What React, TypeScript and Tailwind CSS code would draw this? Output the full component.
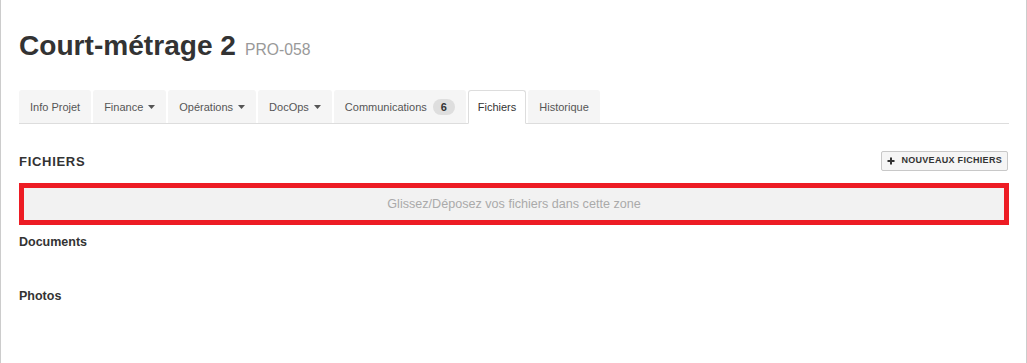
import React from "react";

const Caret = () => (
  <svg width="7" height="4" viewBox="0 0 7 4" className="ml-[5px]" aria-hidden>
    <path d="M0 0 L7 0 L3.5 4 Z" fill="#555" />
  </svg>
);

type Tab = { label: string; caret?: boolean; badge?: string; active?: boolean };

const tabs: Tab[] = [
  { label: "Info Projet" },
  { label: "Finance", caret: true },
  { label: "Opérations", caret: true },
  { label: "DocOps", caret: true },
  { label: "Communications", badge: "6" },
  { label: "Fichiers", active: true },
  { label: "Historique" },
];

export default function App() {
  return (
    <div
      className="w-full h-[363px] bg-white border-x border-[#cccccc] overflow-hidden text-[#333]"
      style={{ fontFamily: '"Liberation Sans", Arial, sans-serif' }}
    >
      <div className="pl-[18px] pr-[17px] pt-[32px]">
        <h1 className="flex items-baseline leading-none">
          <span className="text-[28.1px] font-bold text-[#333] leading-[28px]">Court-métrage 2</span>
          <span className="ml-[9px] text-[15.7px] text-[#999]">PRO-058</span>
        </h1>

        <div className="mt-[30px] flex items-end gap-[2px] border-b border-[#dddddd] h-[34px]">
          {tabs.map((t) =>
            t.active ? (
              <div
                key={t.label}
                className="h-[34px] -mb-px px-[9px] flex items-center bg-white border border-[#dddddd] border-b-white rounded-t-[3px] text-[11px] text-[#333] pt-[1px]"
              >
                {t.label}
              </div>
            ) : (
              <div
                key={t.label}
                className="h-[33px] px-[11px] pt-[1px] flex items-center bg-[#f5f5f5] rounded-t-[3px] text-[11px] text-[#555]"
              >
                {t.label}
                {t.caret && <Caret />}
                {t.badge && (
                  <span className="ml-[6px] h-[16px] w-[22px] rounded-full bg-[#dedede] text-[#333] font-bold text-[11px] flex items-center justify-center">
                    {t.badge}
                  </span>
                )}
              </div>
            )
          )}
        </div>

        <div className="mt-[27px] h-[20px] flex items-center justify-between">
          <div className="text-[13px] font-bold tracking-[0.7px] text-[#333] pt-[1px]">FICHIERS</div>
          <button className="h-[20px] px-[5px] flex items-center gap-[6px] border border-[#c8c8c8] rounded-[2px] bg-[#f5f5f5] text-[9px] font-bold tracking-[0.3px] text-[#333] mr-[1px]">
            <svg width="8" height="8" viewBox="0 0 8 8" aria-hidden>
              <path d="M4 0.5 V7.5 M0.5 4 H7.5" stroke="#333" strokeWidth="2" />
            </svg>
            NOUVEAUX FICHIERS
          </button>
        </div>

        <div className="mt-[12px] h-[42px] border-[5px] border-[#ed1c24] bg-[#f2f2f2] flex items-center justify-center text-[12.6px] text-[#aaaaaa]">
          Glissez/Déposez vos fichiers dans cette zone
        </div>

        <div className="mt-[9px] h-[16px] flex items-center text-[12.5px] font-bold text-[#333]">Documents</div>
        <div className="mt-[38px] h-[16px] flex items-center text-[12.5px] font-bold text-[#333]">Photos</div>
      </div>
    </div>
  );
}
